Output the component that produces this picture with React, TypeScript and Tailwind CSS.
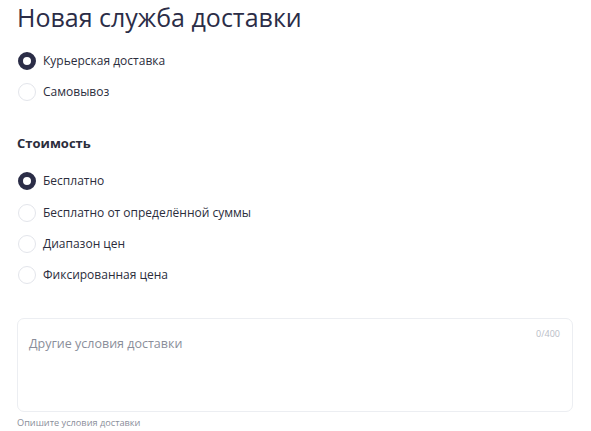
import { useState } from 'react';

const font = { fontFamily: '"Open Sans", "Noto Sans", sans-serif' };

function Radio({ label, checked, onClick }: { label: string; checked: boolean; onClick: () => void }) {
  return (
    <label onClick={onClick} className="flex h-[31.3px] cursor-pointer items-center gap-[7px] pl-[1px]">
      <span
        className={
          checked
            ? 'box-border h-[18px] w-[18px] rounded-full border-[5px] border-[#2b2d47] bg-white'
            : 'box-border h-[18px] w-[18px] rounded-full border border-[#e3e5eb] bg-white'
        }
      />
      <span className="text-[12px] text-[#2b2d3c]">{label}</span>
    </label>
  );
}

export default function App() {
  const [type, setType] = useState(0);
  const [cost, setCost] = useState(0);

  const types = ['Курьерская доставка', 'Самовывоз'];
  const costs = ['Бесплатно', 'Бесплатно от определённой суммы', 'Диапазон цен', 'Фиксированная цена'];

  return (
    <div style={font} className="h-[431px] w-[591px] overflow-hidden bg-white px-[17px] pt-[2px]">
      <h1 className="text-[25px] font-medium leading-[30px] text-[#2b2d47]">Новая служба доставки</h1>

      <div className="mt-[13px] flex flex-col">
        {types.map((t, i) => (
          <Radio key={t} label={t} checked={type === i} onClick={() => setType(i)} />
        ))}
      </div>

      <h2 className="mt-[25px] text-[13px] font-bold leading-[20px] text-[#2b2d3c]">Стоимость</h2>

      <div className="mt-[13px] flex flex-col">
        {costs.map((c, i) => (
          <Radio key={c} label={c} checked={cost === i} onClick={() => setCost(i)} />
        ))}
      </div>

      <div className="relative mt-[27px] h-[94px] w-[556px] rounded-[7px] border border-[#eceef2]">
        <span className="absolute right-[12px] top-[8px] text-[9px] text-[#b8bcc6]">0/400</span>
        <textarea
          placeholder="Другие условия доставки"
          className="h-full w-full resize-none bg-transparent px-[11px] pt-[16px] text-[12.5px] text-[#2b2d3c] outline-none placeholder:text-[#8a8e9a]"
        />
      </div>
      <p className="mt-[4px] text-[9.2px] text-[#8a8e9a]">Опишите условия доставки</p>
    </div>
  );
}
